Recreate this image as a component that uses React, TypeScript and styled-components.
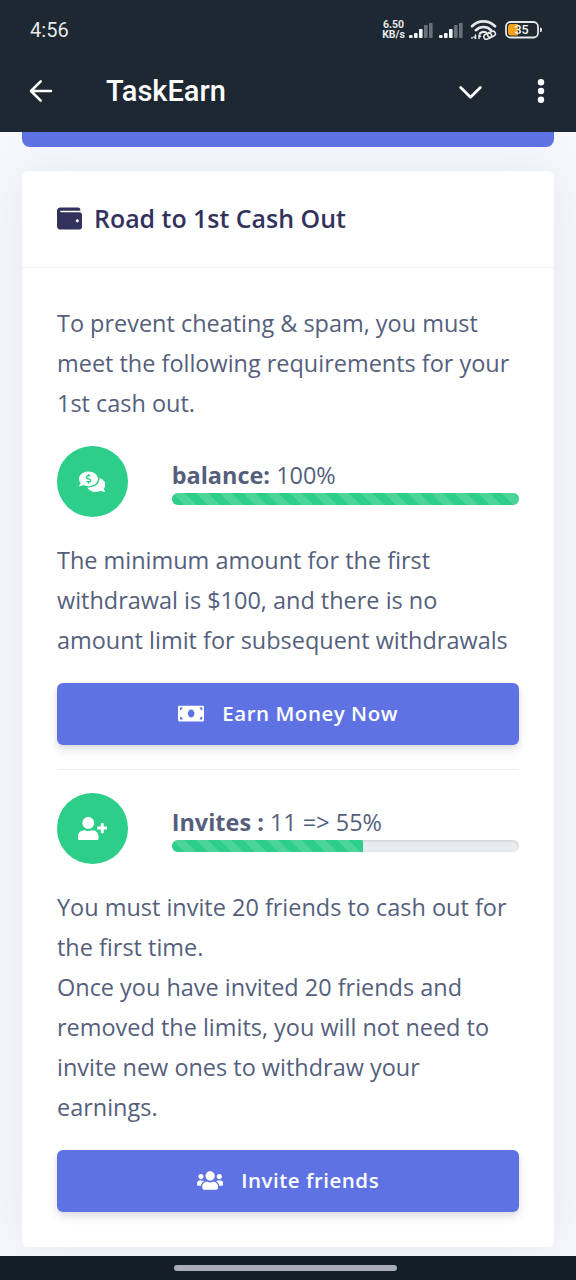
import React from 'react';
import styled, { createGlobalStyle } from 'styled-components';
import { FaWallet, FaCommentsDollar, FaMoneyBill, FaUserPlus, FaUsers } from 'react-icons/fa';

const GlobalStyle = createGlobalStyle`
  *, *::before, *::after { box-sizing: border-box; }
  html, body { margin: 0; padding: 0; background: #f8f9fe; }
  body { font-family: 'Open Sans', sans-serif; color: #555f7d; overflow: hidden; }
`;

const Screen = styled.div`
  width: 576px;
  height: 1280px;
  display: flex;
  flex-direction: column;
  overflow: hidden;
  background: #f6f8fc;
`;

const TopBar = styled.header`
  flex: none;
  height: 132px;
  background: #1e2832;
  color: #fff;
  font-family: Roboto, sans-serif;
`;

const StatusBar = styled.div`
  height: 58px;
  display: flex;
  align-items: center;
  padding: 2px 33px 0 30px;
  color: #e6e8ea;
`;

const Clock = styled.span`
  flex: 1;
  font-size: 20px;
  letter-spacing: 0.1px;
`;

const Speed = styled.span`
  width: 23px;
  margin-right: 4px;
  font-size: 10.5px;
  line-height: 10px;
  font-weight: 700;
  text-align: center;
  white-space: nowrap;
`;

const StatusIcon = styled.svg<{ $gap?: number }>`
  flex: none;
  display: block;
  margin-right: ${({ $gap = 0 }) => $gap}px;
`;

const NavBar = styled.div`
  height: 66px;
  display: flex;
  align-items: center;
  padding: 0 31px 0 28px;
`;

const AppTitle = styled.h1`
  flex: 1;
  margin: 0 0 0 53px;
  font-size: 29px;
  font-weight: 500;
  line-height: 1;
`;

const Content = styled.main`
  flex: 1;
  min-height: 0;
  padding: 0 22px;
  overflow: hidden;
`;

const PreviousButton = styled.div`
  height: 15px;
  margin-bottom: 24px;
  border-radius: 0 0 8px 8px;
  background: #5e72e4;
`;

const Card = styled.section`
  height: 1076px;
  border-radius: 6px;
  background: #fff;
  box-shadow: 0 0 47px rgba(136, 152, 170, 0.17);
`;

const CardHeader = styled.div`
  height: 97px;
  display: flex;
  align-items: center;
  gap: 12px;
  padding: 0 35px 1.5px;
  border-bottom: 1.5px solid #eef0f3;
  color: #32325d;
  font-size: 25px;
`;

const CardTitle = styled.h2`
  margin: 0;
  font-size: 24.93px;
  font-weight: 600;
  line-height: 1.4;
`;

const CardBody = styled.div`
  padding: 35px 35px 0;
`;

const Text = styled.p`
  margin: 0 0 23px;
  font-size: 23.46px;
  line-height: 40px;
  white-space: nowrap;
`;

const Requirement = styled.div`
  display: flex;
  align-items: flex-start;
  height: 70.5px;
  margin-bottom: 23.5px;
`;

const IconCircle = styled.div<{ $iconWidth: number }>`
  flex: none;
  width: 70.5px;
  height: 70.5px;
  margin-right: 44.2px;
  display: flex;
  align-items: center;
  justify-content: center;
  border-radius: 50%;
  background: #2dce89;
  color: #fff;

  svg { width: ${({ $iconWidth }) => $iconWidth}px; height: 23.5px; }
`;

const Meter = styled.div`
  flex: 1;
  padding-top: 12px;
`;

const MeterLabel = styled.div`
  margin-bottom: 0.5px;
  font-size: 23.46px;
  line-height: 34px;
  white-space: nowrap;

  b { font-weight: 700; }
`;

const Track = styled.div`
  height: 12px;
  border-radius: 6px;
  overflow: hidden;
  background: #e9ecef;
  box-shadow: inset 0 1px 3px rgba(0, 0, 0, 0.12);
`;

const Fill = styled.div<{ $percent: number }>`
  width: ${({ $percent }) => $percent}%;
  height: 100%;
  background-color: #2dce89;
  background-image: linear-gradient(
    45deg,
    rgba(255, 255, 255, 0.15) 25%,
    transparent 25%,
    transparent 50%,
    rgba(255, 255, 255, 0.15) 50%,
    rgba(255, 255, 255, 0.15) 75%,
    transparent 75%,
    transparent
  );
  background-size: 23.5px 23.5px;
`;

const ActionButton = styled.button`
  width: 100%;
  height: 62px;
  display: flex;
  align-items: center;
  justify-content: center;
  gap: 18px;
  padding: 0 0 2px;
  border: 0;
  border-radius: 6px;
  background: #5e72e4;
  color: #fff;
  font: 600 20.5px 'Open Sans', sans-serif;
  letter-spacing: 0.52px;
  box-shadow: 0 6px 9px rgba(50, 50, 93, 0.11), 0 1px 4px rgba(0, 0, 0, 0.08);

  svg { width: 26.3px; height: 21px; margin-top: 1px; }
`;

const Divider = styled.hr`
  height: 1.5px;
  margin: 23.5px 0 23px;
  border: 0;
  background: #eceef1;
`;

const GestureBar = styled.footer`
  flex: none;
  height: 24px;
  display: flex;
  justify-content: center;
  align-items: center;
  padding: 0 5px 0 0;
  background: #141e26;
`;

const GesturePill = styled.div`
  width: 223px;
  height: 6px;
  border-radius: 3px;
  background: #a9adb8;
`;

const Signal = ({ gap }: { gap: number }) => (
  <StatusIcon $gap={gap} width="24" height="16" viewBox="0 0 24 16">
    {[3, 5, 9, 13, 15].map((h, i) => (
      <rect key={h} x={i * 5} y={16 - h} width="3.6" height={h} rx="0.8" fill={i < 3 ? '#f1f3f4' : '#68717a'} />
    ))}
  </StatusIcon>
);

const Wifi = () => (
  <StatusIcon $gap={8} width="27" height="20" viewBox="0 0 27 20" fill="none" stroke="#e6e8ea" strokeLinecap="round">
    <path d="M2 6.2C8.5-.2 18.5-.2 25 6.2" strokeWidth="2.7" />
    <path d="M5.8 10.2C10.3 6 16.7 6 21.2 10.2" strokeWidth="2.6" />
    <path d="M10 13.5c2-1.8 4-2 6-1" strokeWidth="2.4" />
    <path d="M2 17.5v.8M5.5 15v3.5m-1.5-1.5 1.5 1.5M9 18.5V15m0 0 1.5 1.5" strokeWidth="1.5" />
    <g transform="rotate(-22 19.5 15.3)" strokeWidth="1.6">
      <rect x="13.5" y="13" width="8" height="5" rx="2.5" />
      <rect x="17.7" y="12.6" width="8" height="5" rx="2.5" />
    </g>
  </StatusIcon>
);

const Battery = () => (
  <StatusIcon width="38" height="18" viewBox="0 0 38 18">
    <rect x="1" y="1" width="32" height="15.5" rx="4.5" fill="none" stroke="#e6e8ea" strokeWidth="1.8" />
    <path d="M6 3h7v11.5H6a3 3 0 0 1-3-3V6a3 3 0 0 1 3-3z" fill="#f5a31c" />
    <path d="M35 6.5c1.5 0 2 .7 2 2.2s-.5 2.3-2 2.3z" fill="#e6e8ea" />
    <text x="16.5" y="13.2" textAnchor="middle" fontFamily="Roboto, sans-serif" fontSize="12.5" fontWeight="500" fill="#fff">35</text>
  </StatusIcon>
);

export default function App() {
  return (
    <Screen>
      <GlobalStyle />
      <TopBar>
        <StatusBar>
          <Clock>4:56</Clock>
          <Speed>6.50<br />KB/s</Speed>
          <Signal gap={6} />
          <Signal gap={7} />
          <Wifi />
          <Battery />
        </StatusBar>
        <NavBar>
          <StatusIcon width="25" height="24" viewBox="0 0 25 24" fill="none" stroke="#fff" strokeWidth="2.6" strokeLinecap="round" strokeLinejoin="round">
            <path d="M12.7 2.3 3 12l9.7 9.7M3.3 12H23" />
          </StatusIcon>
          <AppTitle>TaskEarn</AppTitle>
          <StatusIcon $gap={54} width="24" height="16" viewBox="0 0 24 16" fill="none" stroke="#fff" strokeWidth="2.7" strokeLinecap="round" strokeLinejoin="round">
            <path d="m1.7 4.5 9.8 9.8 9.8-9.8" />
          </StatusIcon>
          <StatusIcon width="8" height="26" viewBox="0 0 8 26" fill="#fff">
            <circle cx="4" cy="4.2" r="3.2" />
            <circle cx="4" cy="13" r="3.2" />
            <circle cx="4" cy="21.8" r="3.2" />
          </StatusIcon>
        </NavBar>
      </TopBar>
      <Content>
        <PreviousButton />
        <Card>
          <CardHeader>
            <FaWallet />
            <CardTitle>Road to 1st Cash Out</CardTitle>
          </CardHeader>
          <CardBody>
            <Text>
              To prevent cheating &amp; spam, you must<br />
              meet the following requirements for your<br />
              1st cash out.
            </Text>
            <Requirement>
              <IconCircle $iconWidth={26.4}><FaCommentsDollar /></IconCircle>
              <Meter>
                <MeterLabel><b>balance:</b> 100%</MeterLabel>
                <Track><Fill $percent={100} /></Track>
              </Meter>
            </Requirement>
            <Text>
              The minimum amount for the first<br />
              withdrawal is $100, and there is no<br />
              amount limit for subsequent withdrawals
            </Text>
            <ActionButton><FaMoneyBill />Earn Money Now</ActionButton>
            <Divider />
            <Requirement>
              <IconCircle $iconWidth={29.4}><FaUserPlus /></IconCircle>
              <Meter>
                <MeterLabel><b>Invites :</b> 11 =&gt; 55%</MeterLabel>
                <Track><Fill $percent={55} /></Track>
              </Meter>
            </Requirement>
            <Text>
              You must invite 20 friends to cash out for<br />
              the first time.<br />
              Once you have invited 20 friends and<br />
              removed the limits, you will not need to<br />
              invite new ones to withdraw your<br />
              earnings.
            </Text>
            <ActionButton><FaUsers />Invite friends</ActionButton>
          </CardBody>
        </Card>
      </Content>
      <GestureBar><GesturePill /></GestureBar>
    </Screen>
  );
}
